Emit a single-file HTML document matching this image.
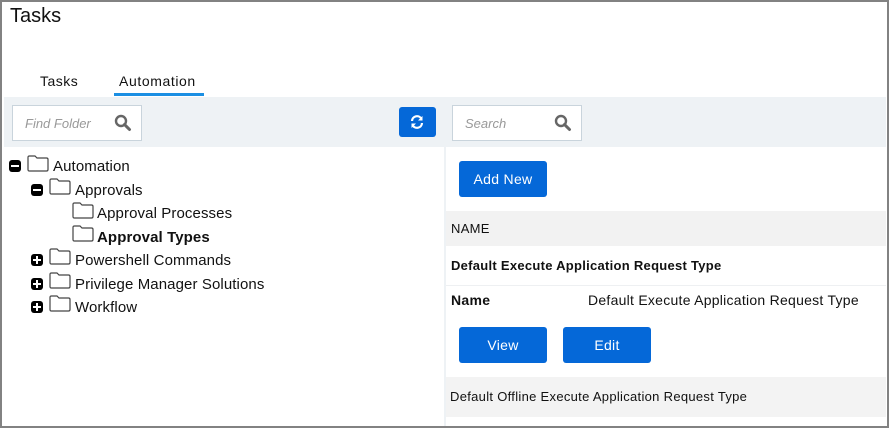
<!DOCTYPE html>
<html><head><meta charset="utf-8"><style>
*{margin:0;padding:0;box-sizing:border-box}
body{width:889px;height:428px;overflow:hidden;background:#fff;font-family:"Liberation Sans",sans-serif;color:#111;position:relative}
.a{position:absolute;white-space:nowrap}
.frame{position:absolute;left:0;top:0;width:889px;height:428px;border:2px solid #828282;pointer-events:none}
.btn{position:absolute;background:#0568d8;color:#fff;border-radius:3px;font-size:14px;text-align:center;letter-spacing:0.3px}
.inp{position:absolute;background:#fff;border:1px solid #c9d4dc;height:36px;width:130px;font-style:italic;color:#999;font-size:13px;padding:10px 0 0 12px}
.tg{position:absolute;width:12px;height:12px;background:#000;border-radius:3px}
.tg:before{content:"";position:absolute;left:2px;top:5px;width:8px;height:2px;background:#fff}
.tg.p:after{content:"";position:absolute;left:5px;top:2px;width:2px;height:8px;background:#fff}
.f{position:absolute;width:22px;height:17px}
.t{position:absolute;font-size:15px;white-space:nowrap;letter-spacing:0.1px}
.r{letter-spacing:0.3px}
</style></head><body>
<div class="a" style="left:10px;top:5px;font-size:20px">Tasks</div>
<div class="a" style="left:40px;top:73px;font-size:14px;letter-spacing:0.5px">Tasks</div>
<div class="a" style="left:119px;top:73px;font-size:14px;letter-spacing:0.6px">Automation</div>
<div class="a" style="left:114px;top:93px;width:90px;height:3px;background:#1b8fe3"></div>
<div class="a" style="left:4px;top:97px;width:882px;height:50px;background:#eef2f5"></div>
<div class="inp" style="left:12px;top:105px">Find Folder</div>
<svg class="a" style="left:114px;top:114px" width="18" height="18" viewBox="0 0 18 18"><circle cx="7" cy="7" r="5" fill="none" stroke="#666" stroke-width="2.4"/><path d="M10.5 10.5L15.5 15.5" stroke="#666" stroke-width="3" stroke-linecap="round"/></svg>
<div class="btn" style="left:399px;top:107px;width:37px;height:30px"></div>
<svg class="a" style="left:409px;top:114px" width="16" height="16" viewBox="0 0 16 16"><path d="M3 7A5 5 0 0 1 12.5 5" fill="none" stroke="#fff" stroke-width="2.2"/><path d="M13.5 2V6.5H9z" fill="#fff"/><path d="M13 9A5 5 0 0 1 3.5 11" fill="none" stroke="#fff" stroke-width="2.2"/><path d="M2.5 14V9.5H7z" fill="#fff"/></svg>
<div class="inp" style="left:452px;top:105px">Search</div>
<svg class="a" style="left:554px;top:114px" width="18" height="18" viewBox="0 0 18 18"><circle cx="7" cy="7" r="5" fill="none" stroke="#666" stroke-width="2.4"/><path d="M10.5 10.5L15.5 15.5" stroke="#666" stroke-width="3" stroke-linecap="round"/></svg>
<div class="a" style="left:444px;top:147px;width:2px;height:281px;background:#eef2f5"></div>

<div class="tg" style="left:9px;top:160px"></div>
<svg class="f" style="left:27px;top:155px" viewBox="0 0 22 17"><path d="M1 2.5Q1 1 2.5 1H8L10 3H19.5Q21 3 21 4.5V14.5Q21 16 19.5 16H2.5Q1 16 1 14.5Z" fill="none" stroke="#444" stroke-width="1.2"/></svg>
<div class="t" style="left:53px;top:158px">Automation</div>
<div class="tg" style="left:31px;top:184px"></div>
<svg class="f" style="left:49px;top:178px" viewBox="0 0 22 17"><path d="M1 2.5Q1 1 2.5 1H8L10 3H19.5Q21 3 21 4.5V14.5Q21 16 19.5 16H2.5Q1 16 1 14.5Z" fill="none" stroke="#444" stroke-width="1.2"/></svg>
<div class="t" style="left:75px;top:182px">Approvals</div>
<svg class="f" style="left:72px;top:202px" viewBox="0 0 22 17"><path d="M1 2.5Q1 1 2.5 1H8L10 3H19.5Q21 3 21 4.5V14.5Q21 16 19.5 16H2.5Q1 16 1 14.5Z" fill="none" stroke="#444" stroke-width="1.2"/></svg>
<div class="t" style="left:97px;top:205px">Approval Processes</div>
<svg class="f" style="left:72px;top:225px" viewBox="0 0 22 17"><path d="M1 2.5Q1 1 2.5 1H8L10 3H19.5Q21 3 21 4.5V14.5Q21 16 19.5 16H2.5Q1 16 1 14.5Z" fill="none" stroke="#444" stroke-width="1.2"/></svg>
<div class="t" style="left:97px;top:229px;font-weight:bold">Approval Types</div>
<div class="tg p" style="left:31px;top:254px"></div>
<svg class="f" style="left:49px;top:248px" viewBox="0 0 22 17"><path d="M1 2.5Q1 1 2.5 1H8L10 3H19.5Q21 3 21 4.5V14.5Q21 16 19.5 16H2.5Q1 16 1 14.5Z" fill="none" stroke="#444" stroke-width="1.2"/></svg>
<div class="t" style="left:75px;top:252px">Powershell Commands</div>
<div class="tg p" style="left:31px;top:278px"></div>
<svg class="f" style="left:49px;top:272px" viewBox="0 0 22 17"><path d="M1 2.5Q1 1 2.5 1H8L10 3H19.5Q21 3 21 4.5V14.5Q21 16 19.5 16H2.5Q1 16 1 14.5Z" fill="none" stroke="#444" stroke-width="1.2"/></svg>
<div class="t" style="left:75px;top:276px">Privilege Manager Solutions</div>
<div class="tg p" style="left:31px;top:301px"></div>
<svg class="f" style="left:49px;top:295px" viewBox="0 0 22 17"><path d="M1 2.5Q1 1 2.5 1H8L10 3H19.5Q21 3 21 4.5V14.5Q21 16 19.5 16H2.5Q1 16 1 14.5Z" fill="none" stroke="#444" stroke-width="1.2"/></svg>
<div class="t" style="left:75px;top:299px">Workflow</div>

<div class="btn" style="left:459px;top:161px;width:88px;height:36px;line-height:36px">Add New</div>
<div class="a" style="left:446px;top:211px;width:440px;height:35px;background:#f2f2f2"></div>
<div class="a r" style="left:451px;top:221px;font-size:13px">NAME</div>
<div class="a r" style="left:451px;top:258px;font-size:13px;font-weight:bold;letter-spacing:0.28px">Default Execute Application Request Type</div>
<div class="a" style="left:446px;top:285px;width:440px;height:1px;background:#eef0f2"></div>
<div class="a r" style="left:451px;top:292px;font-size:14px;font-weight:bold">Name</div>
<div class="a" style="left:588px;top:292px;font-size:14px;letter-spacing:0.26px">Default Execute Application Request Type</div>
<div class="btn" style="left:459px;top:327px;width:88px;height:36px;line-height:36px">View</div>
<div class="btn" style="left:563px;top:327px;width:88px;height:36px;line-height:36px">Edit</div>
<div class="a" style="left:446px;top:377px;width:440px;height:40px;background:#f3f3f3"></div>
<div class="a" style="left:450px;top:389px;font-size:13px;letter-spacing:0.3px">Default Offline Execute Application Request Type</div>
<div class="frame"></div>
</body></html>
